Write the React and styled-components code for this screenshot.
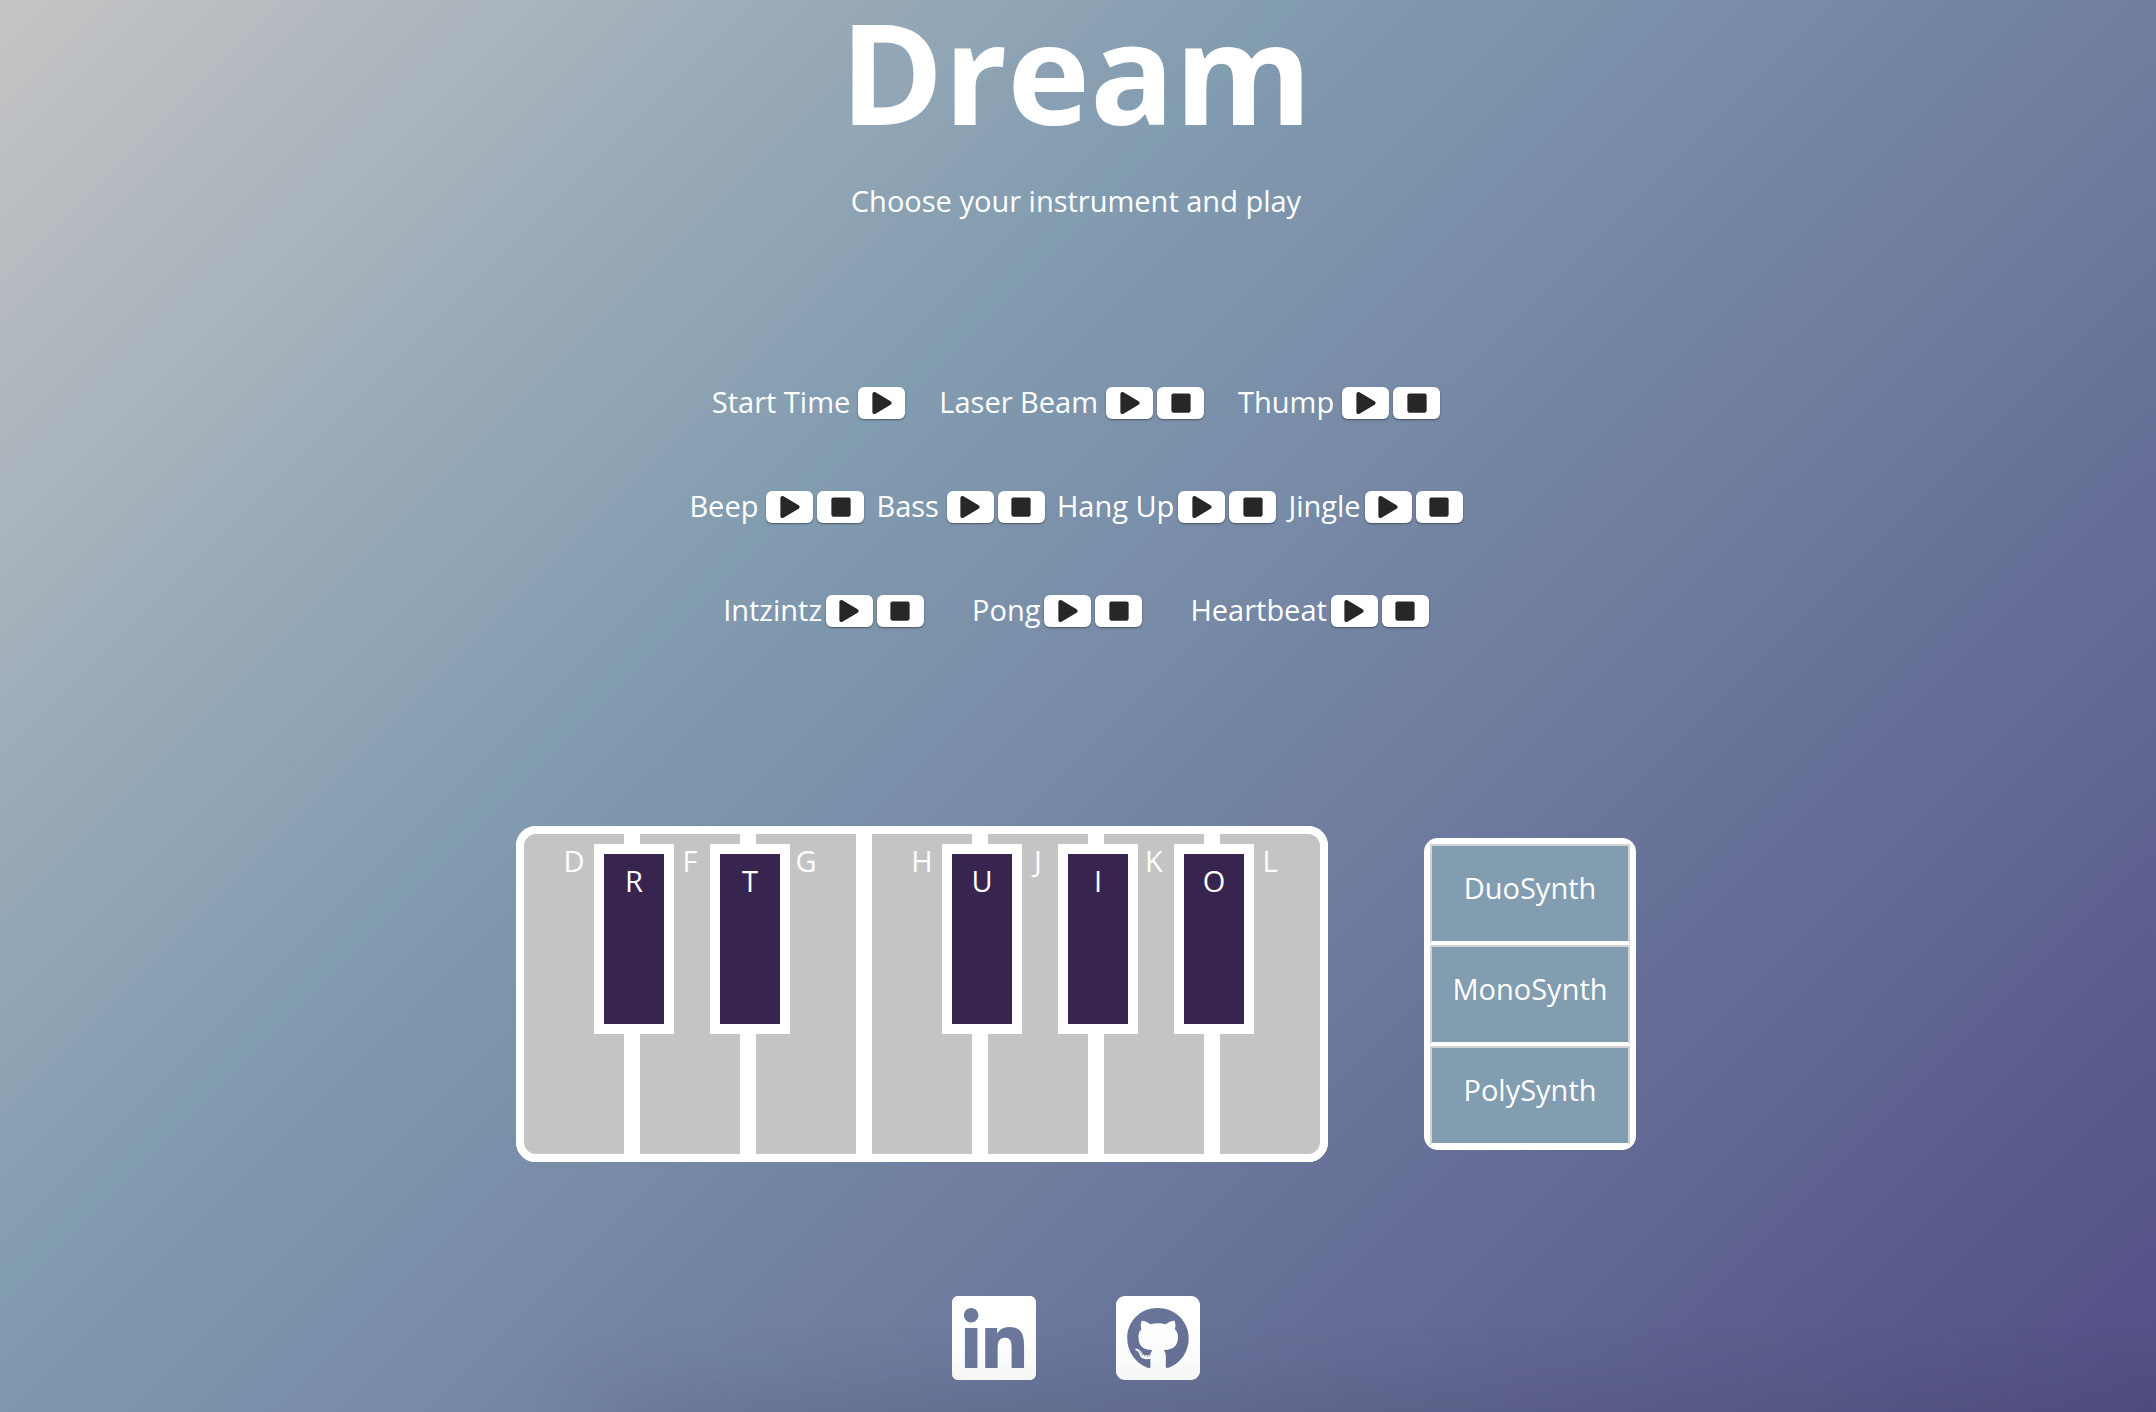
import React from "react";
import styled, { createGlobalStyle } from "styled-components";
import { FaPlay, FaStop, FaLinkedin, FaGithubSquare } from "react-icons/fa";

const GlobalStyle = createGlobalStyle`
  *, *::before, *::after {
    box-sizing: border-box;
  }
  body {
    margin: 0;
    color: #fff;
    font-family: "Open Sans", "Noto Sans", sans-serif;
    font-size: 29px;
    font-weight: 500;
    line-height: 32px;
  }
  button {
    margin: 0;
    color: inherit;
    font: inherit;
    cursor: pointer;
  }
`;

const Page = styled.main`
  display: flex;
  flex-direction: column;
  align-items: center;
  min-height: 100vh;
  padding: 0 4px 24px 0;
  background: linear-gradient(135deg, #c4c4c4 0%, #829cb0 36%, #524e84 100%);
`;

const Title = styled.h1`
  margin: 0;
  font-size: 140px;
  font-weight: 700;
  line-height: 142px;
`;

const Subtitle = styled.p`
  margin: 43px 0 0;
`;

const Pads = styled.section`
  display: flex;
  flex-direction: column;
  align-items: center;
  gap: 72px;
  margin-top: 170px;
`;

const PadRow = styled.div`
  display: flex;
  justify-content: center;
  gap: ${({ $gap }) => $gap}px;
`;

const Pad = styled.div`
  display: flex;
  align-items: center;
  gap: 4px;
  height: 32px;
`;

const PadLabel = styled.span`
  margin-right: ${({ $spaced }) => ($spaced ? 4 : 0)}px;
  padding-bottom: 2px;
  white-space: nowrap;
`;

const PadButton = styled.button`
  display: flex;
  align-items: center;
  justify-content: center;
  width: 47px;
  height: 32px;
  padding: 0;
  border: 0;
  border-radius: 6px;
  background: #fff;
  color: #272727;
  font-size: 22px;
  box-shadow: 0 1px 2px rgba(0, 0, 0, 0.4);
`;

const Instruments = styled.section`
  display: flex;
  align-items: center;
  justify-content: center;
  gap: 96px;
  margin-top: 199px;
`;

const Keyboard = styled.div`
  display: flex;
  border-radius: 20px;
  background: #fff;
`;

const WhiteKey = styled.button`
  display: flex;
  justify-content: center;
  width: 116px;
  height: 336px;
  padding: 11px 0 0;
  border: 8px solid #fff;
  background: #c4c4c4;
`;

const BlackKey = styled.button`
  position: absolute;
  z-index: 1;
  top: 18px;
  left: 78px;
  display: flex;
  justify-content: center;
  width: 80px;
  height: 190px;
  padding: 11px 0 0;
  border: 10px solid #fff;
  background: #372550;
`;

const KeySlot = styled.div`
  position: relative;
  &:first-child ${WhiteKey} {
    border-radius: 20px 0 0 20px;
  }
  &:last-child ${WhiteKey} {
    border-radius: 0 20px 20px 0;
  }
`;

const SynthList = styled.div`
  display: flex;
  flex-direction: column;
  gap: 1px;
  padding: 6px 6px 4px;
  border-radius: 14px;
  background: #fff;
`;

const SynthButton = styled.button`
  width: 200px;
  height: 100px;
  padding: 0 0 12px;
  border: 2px solid #d3d3d3;
  border-bottom: 3px solid #fff;
  background: #829cb0;
`;

const Footer = styled.footer`
  display: flex;
  gap: 80px;
  margin-top: 128px;
`;

const SocialLink = styled.a`
  display: flex;
  color: #fff;
  font-size: 96px;
  svg {
    width: 84px;
  }
`;

const BottomShade = styled.div`
  position: fixed;
  top: 100%;
  right: -40px;
  left: 28%;
  height: 40px;
  box-shadow: 0 0 80px rgba(40, 50, 60, 0.25);
  pointer-events: none;
`;

const padRows = [
  {
    gap: 34,
    pads: [
      { name: "Start Time", spaced: true, playOnly: true },
      { name: "Laser Beam", spaced: true },
      { name: "Thump", spaced: true },
    ],
  },
  {
    gap: 12,
    pads: [
      { name: "Beep", spaced: true },
      { name: "Bass", spaced: true },
      { name: "Hang Up" },
      { name: "Jingle" },
    ],
  },
  {
    gap: 48,
    pads: [{ name: "Intzintz" }, { name: "Pong" }, { name: "Heartbeat" }],
  },
];

const keys = [
  { white: "D", black: "R" },
  { white: "F", black: "T" },
  { white: "G" },
  { white: "H", black: "U" },
  { white: "J", black: "I" },
  { white: "K", black: "O" },
  { white: "L" },
];

const synths = ["DuoSynth", "MonoSynth", "PolySynth"];

export default function App() {
  return (
    <>
      <GlobalStyle />
      <Page>
        <Title>Dream</Title>
        <Subtitle>Choose your instrument and play</Subtitle>

        <Pads>
          {padRows.map(({ gap, pads }) => (
            <PadRow key={gap} $gap={gap}>
              {pads.map(({ name, spaced, playOnly }) => (
                <Pad key={name}>
                  <PadLabel $spaced={spaced}>{name}</PadLabel>
                  <PadButton type="button" aria-label={`Play ${name}`}>
                    <FaPlay />
                  </PadButton>
                  {!playOnly && (
                    <PadButton type="button" aria-label={`Stop ${name}`}>
                      <FaStop />
                    </PadButton>
                  )}
                </Pad>
              ))}
            </PadRow>
          ))}
        </Pads>

        <Instruments>
          <Keyboard>
            {keys.map(({ white, black }) => (
              <KeySlot key={white}>
                <WhiteKey type="button">{white}</WhiteKey>
                {black && <BlackKey type="button">{black}</BlackKey>}
              </KeySlot>
            ))}
          </Keyboard>
          <SynthList>
            {synths.map((name) => (
              <SynthButton key={name} type="button">
                {name}
              </SynthButton>
            ))}
          </SynthList>
        </Instruments>

        <Footer>
          <SocialLink href="#linkedin" aria-label="LinkedIn">
            <FaLinkedin />
          </SocialLink>
          <SocialLink href="#github" aria-label="GitHub">
            <FaGithubSquare />
          </SocialLink>
        </Footer>
      </Page>
      <BottomShade />
    </>
  );
}
